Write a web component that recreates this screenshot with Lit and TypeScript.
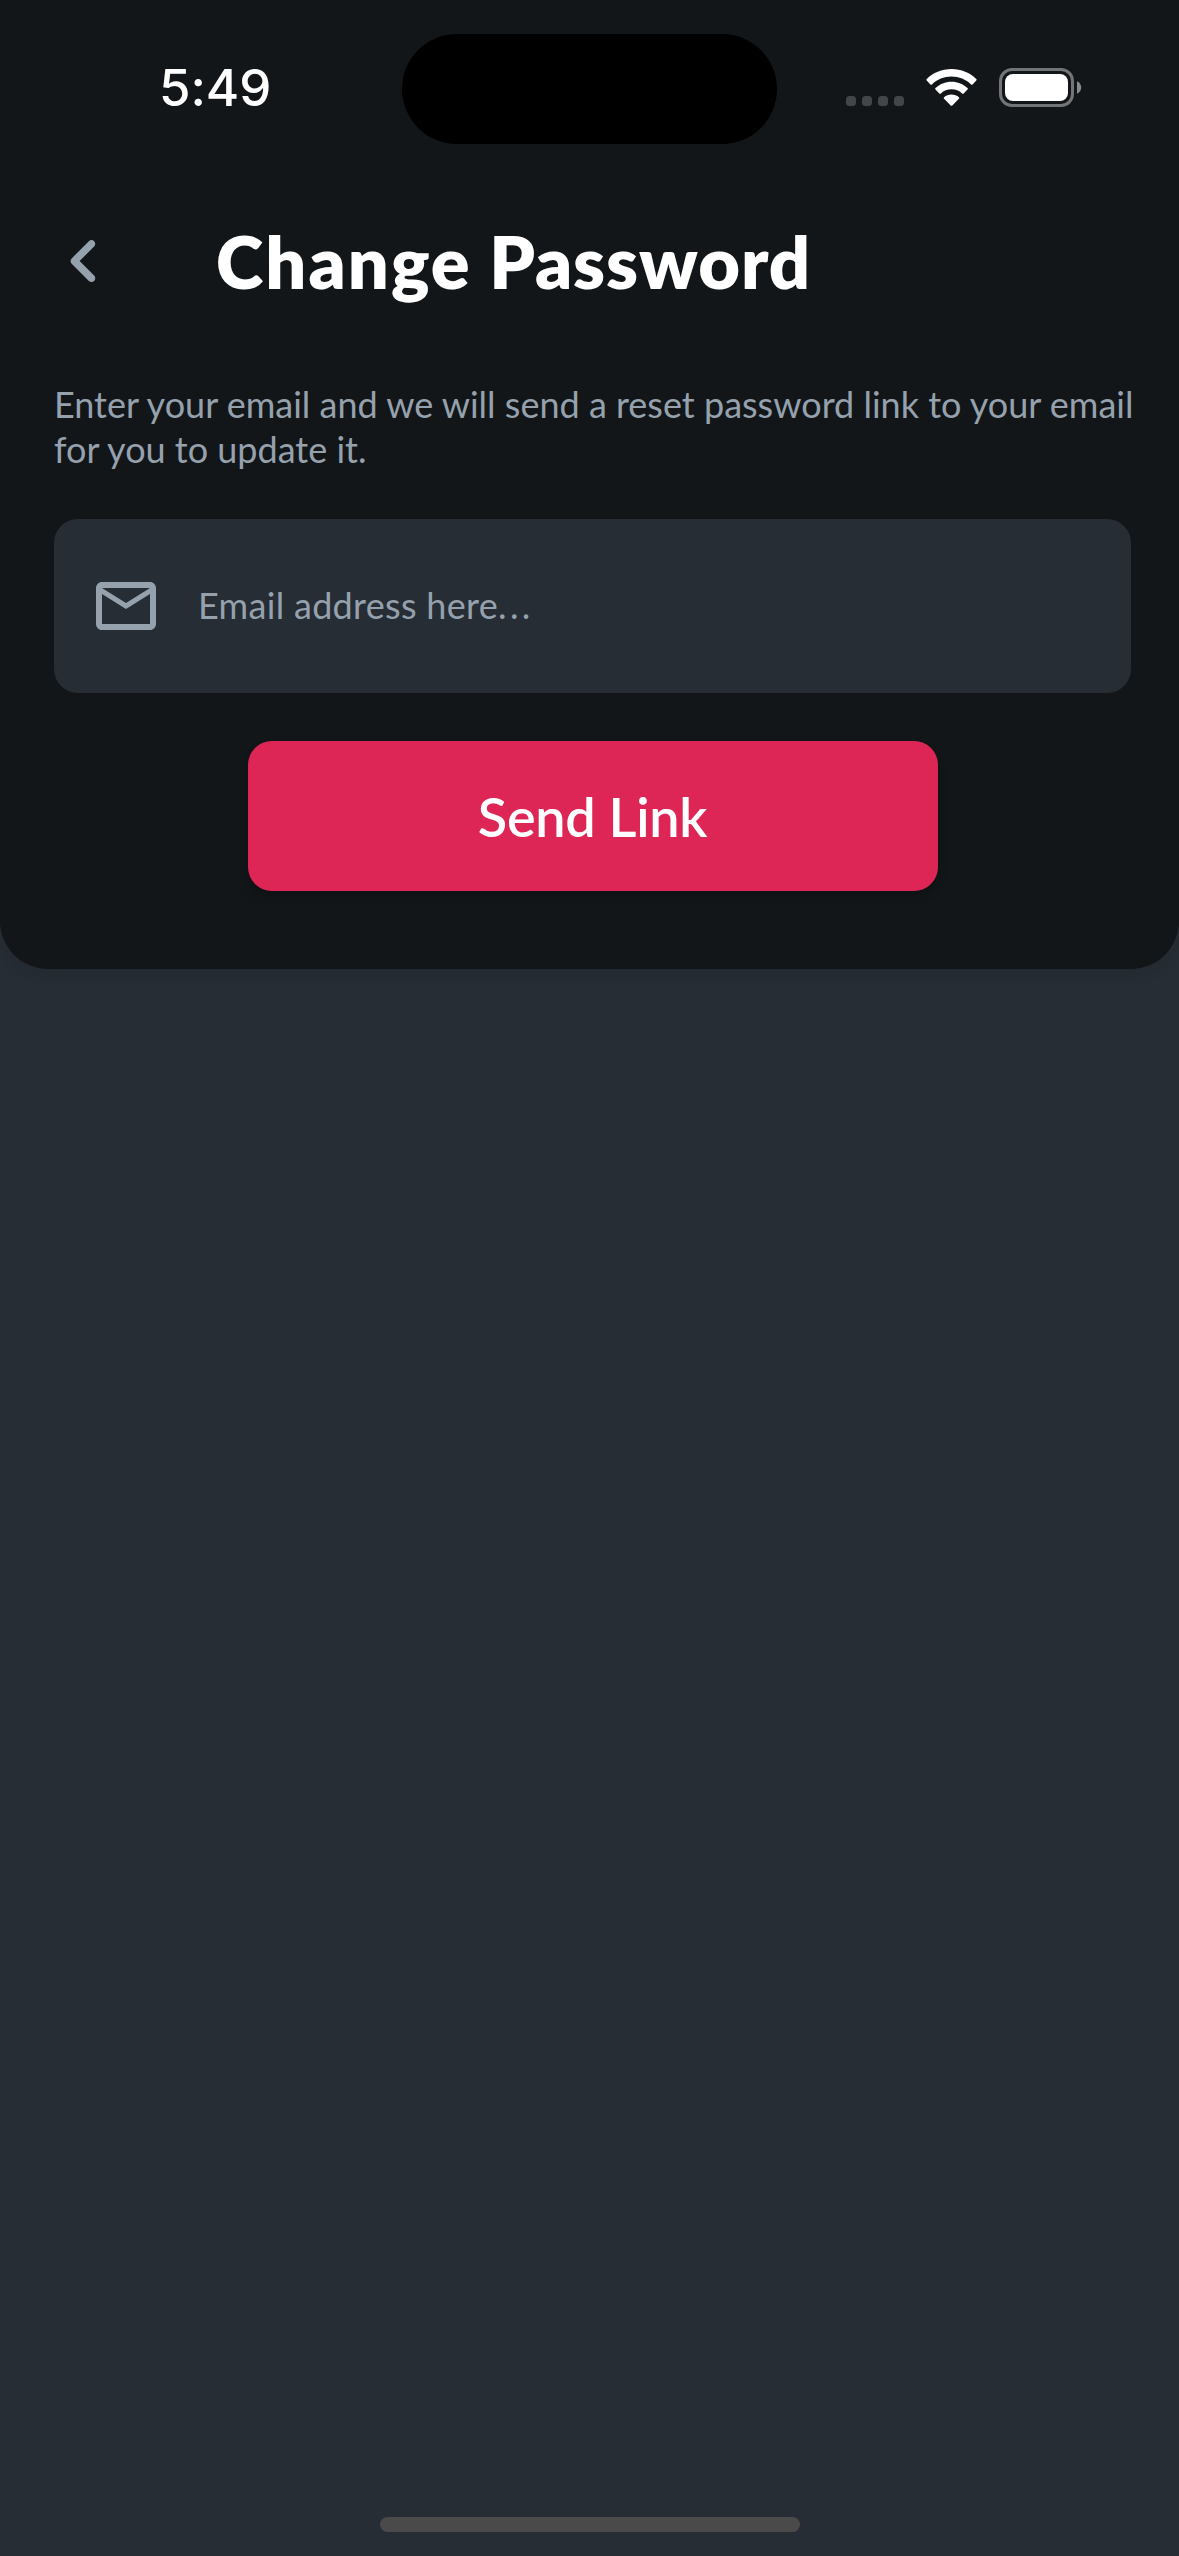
import { LitElement, html, css } from "lit";
import { customElement } from "lit/decorators.js";

@customElement("status-bar")
class StatusBar extends LitElement {
  static styles = css`
    :host {
      display: grid;
      grid-template-columns: 402px 375px 402px;
      align-items: center;
      height: 110px;
      padding-top: 34px;
    }
    .time {
      padding-left: 159px;
      padding-bottom: 2px;
      color: #fff;
      font: 550 51px/60px Inter, "Liberation Sans", sans-serif;
      letter-spacing: -0.1px;
    }
    .island {
      height: 110px;
      border-radius: 55px;
      background: #000;
    }
    .signals {
      display: flex;
      align-items: flex-end;
      height: 39px;
      padding-left: 69px;
      padding-bottom: 3px;
    }
    .dots {
      display: flex;
      gap: 6px;
      padding-bottom: 1px;
    }
    .dot {
      width: 10px;
      height: 10px;
      border-radius: 3.5px;
      background: #434648;
    }
    .wifi {
      margin: 0 22px 1px 22px;
    }
    svg {
      display: block;
    }
  `;

  render() {
    return html`
      <div class="time">5:49</div>
      <div class="island"></div>
      <div class="signals">
        <div class="dots">
          ${[0, 1, 2, 3].map(() => html`<div class="dot"></div>`)}
        </div>
        <svg class="wifi" width="51" height="38" viewBox="0 0 51 38" fill="#fff">
          <path d="M25.5 1C35.2 1 44 4.8 50.3 11Q51 11.8 50.3 12.6L46.6 16.4Q45.8 17.1 45 16.4C39.9 11.6 33 8.6 25.5 8.6S11.1 11.6 6 16.4Q5.2 17.1 4.4 16.4L.7 12.6Q0 11.8.7 11C7 4.8 15.8 1 25.5 1Z" />
          <path d="M25.5 13.7C31.7 13.7 37.3 16.1 41.5 20Q42.3 20.8 41.5 21.6L37.7 25.4Q36.9 26.1 36.1 25.4C33.3 22.8 29.6 21.3 25.5 21.3S17.7 22.8 14.9 25.4Q14.1 26.1 13.3 25.4L9.5 21.6Q8.7 20.8 9.5 20C13.7 16.1 19.3 13.7 25.5 13.7Z" />
          <path d="M25.5 26.5C28.4 26.5 31 27.5 32.9 29.2Q33.6 30 32.9 30.8L26.3 37.4Q25.5 38.1 24.7 37.4L18.1 30.8Q17.4 30 18.1 29.2C20 27.5 22.6 26.5 25.5 26.5Z" />
        </svg>
        <svg width="83" height="39" viewBox="0 0 83 39">
          <rect x="1.5" y="1.5" width="72" height="36" rx="11.5" fill="none" stroke="#727476" stroke-width="3" />
          <rect x="6" y="6" width="63" height="27" rx="8" fill="#fff" />
          <path d="M78 13.2C80.5 14.2 82.2 16.6 82.2 19.5S80.5 24.8 78 25.8Z" fill="#898b8d" />
        </svg>
      </div>
    `;
  }
}

@customElement("app-root")
class AppRoot extends LitElement {
  static styles = css`
    :host {
      display: flex;
      flex-direction: column;
      justify-content: space-between;
      align-items: center;
      width: 1179px;
      height: 2556px;
      background: #262d34;
      font-family: Lato, "Open Sans", sans-serif;
      overflow: hidden;
    }
    .panel {
      box-sizing: border-box;
      width: 1179px;
      height: 969px;
      border-radius: 0 0 48px 48px;
      background: #121619;
      box-shadow: 0 6px 12px rgba(20, 24, 27, 0.1);
    }
    .header {
      display: flex;
      align-items: center;
      height: 90px;
      margin-top: 72px;
      padding-left: 39px;
      gap: 87px;
    }
    .title {
      margin: 0;
      color: #fff;
      font-size: 72px;
      font-weight: 800;
      line-height: 88px;
      letter-spacing: 0.9px;
      white-space: nowrap;
    }
    .wide {
      letter-spacing: 2.1px;
    }
    .form {
      display: flex;
      flex-direction: column;
      align-items: center;
      padding: 76px 48px 0 54px;
    }
    .hint {
      align-self: stretch;
      margin: 0;
      color: #95a1ac;
      font-size: 36px;
      line-height: 45px;
      white-space: nowrap;
    }
    .field {
      box-sizing: border-box;
      align-self: stretch;
      display: flex;
      align-items: center;
      gap: 36px;
      height: 174px;
      margin-top: 47px;
      padding-left: 36px;
      border-radius: 24px;
      background: #262d34;
    }
    .placeholder {
      padding-bottom: 1px;
      color: #95a1ac;
      font-size: 36px;
      line-height: 45px;
      letter-spacing: 0.3px;
    }
    .ellipsis {
      letter-spacing: 3.4px;
    }
    .send {
      width: 690px;
      height: 150px;
      margin-top: 48px;
      padding: 1px 0 0;
      border: 0;
      border-radius: 24px;
      background: #dd2655;
      box-shadow: 0 6px 9px rgba(0, 0, 0, 0.2);
      color: #fff;
      font: 600 54px/66px Lato, "Open Sans", sans-serif;
      letter-spacing: -0.3px;
    }
    .home {
      width: 420px;
      height: 15px;
      margin-bottom: 24px;
      border-radius: 8px;
      background: #4a4a4a;
    }
    svg {
      display: block;
      flex: none;
    }
  `;

  render() {
    return html`
      <div class="panel">
        <status-bar></status-bar>
        <div class="header">
          <svg width="90" height="90" viewBox="0 0 24 24" fill="#95a1ac">
            <path d="M14.71 6.71c-.39-.39-1.02-.39-1.41 0L8.71 11.3c-.39.39-.39 1.02 0 1.41l4.59 4.59c.39.39 1.02.39 1.41 0 .39-.39.39-1.02 0-1.41L10.83 12l3.88-3.88c.39-.39.38-1.03 0-1.41z" />
          </svg>
          <h1 class="title"><span class="wide">Change</span> Password</h1>
        </div>
        <div class="form">
          <p class="hint">
            Enter your email and we will send a reset password link to your email<br />
            for you to update it.
          </p>
          <div class="field">
            <svg width="72" height="72" viewBox="0 0 24 24" fill="#95a1ac">
              <path d="M20 4H4c-1.1 0-2 .9-2 2v12c0 1.1.9 2 2 2h16c1.1 0 2-.9 2-2V6c0-1.1-.9-2-2-2zm0 14H4V8l8 5 8-5v10zm-8-7L4 6h16l-8 5z" />
            </svg>
            <span class="placeholder">Email address here<span class="ellipsis">...</span></span>
          </div>
          <button class="send">Send Link</button>
        </div>
      </div>
      <div class="home"></div>
    `;
  }
}
